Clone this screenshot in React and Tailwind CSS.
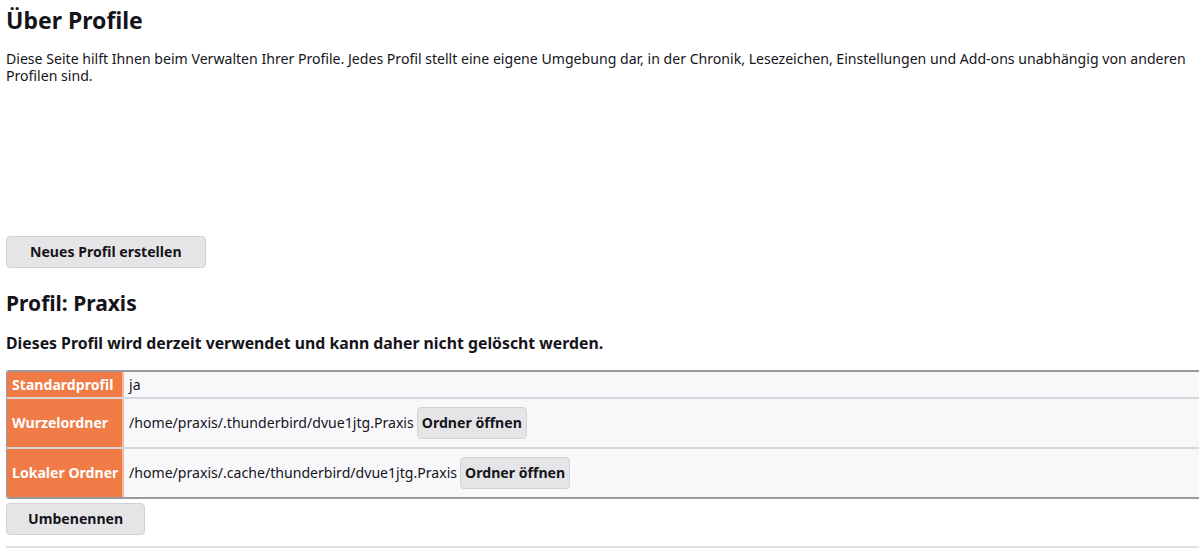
const rows = [
  { label: 'Standardprofil', value: 'ja' },
  { label: 'Wurzelordner', value: '/home/praxis/.thunderbird/dvue1jtg.Praxis', button: true },
  { label: 'Lokaler Ordner', value: '/home/praxis/.cache/thunderbird/dvue1jtg.Praxis', button: true },
]

function Btn({ children, className = '' }) {
  return (
    <button
      className={`whitespace-nowrap rounded-[4px] border border-[#d2d2d6] bg-[#e5e5e7] text-[14.1px] font-bold text-[#15141a] ${className}`}
    >
      {children}
    </button>
  )
}

export default function App() {
  return (
    <div className="min-h-[555px] bg-white px-[6px] pr-[0px] text-[#15141a] font-['Noto_Sans',sans-serif]">
      <h1 className="pt-[4px] text-[23px] font-bold leading-[32px]">Über Profile</h1>
      <p className="mt-[14px] pr-[4px] text-[14.1px] leading-[17px]">
        Diese Seite hilft Ihnen beim Verwalten Ihrer Profile. Jedes Profil stellt eine eigene Umgebung dar, in der
        Chronik, Lesezeichen, Einstellungen und Add-ons unabhängig von anderen Profilen sind.
      </p>

      <div className="mt-[152px]">
        <Btn className="h-[32px] px-[23px]">Neues Profil erstellen</Btn>
      </div>

      <h2 className="mt-[21px] text-[21px] font-bold leading-[28px]">Profil: Praxis</h2>
      <p className="mt-[16px] text-[15.8px] font-bold leading-[20px]">
        Dieses Profil wird derzeit verwendet und kann daher nicht gelöscht werden.
      </p>

      <div className="mt-[17px] overflow-hidden rounded-l-[3px] border-y-2 border-l border-[#9a9a9e] bg-[#f8f8fa] text-[14.1px]">
        {rows.map((r, i) => (
          <div key={r.label} className={`flex ${i > 0 ? 'border-t-2 border-[#d7d7db]' : ''}`}>
            <div
              className={`flex w-[117px] shrink-0 items-center whitespace-nowrap border-r-2 border-[#f6b89a] bg-[#f17b47] px-[5px] font-bold text-white ${
                r.button ? 'h-[48px]' : 'h-[25px]'
              }`}
            >
              {r.label}
            </div>
            <div className="flex items-center gap-[3px] px-[5px] whitespace-nowrap">
              <span>{r.value}</span>
              {r.button && <Btn className="h-[32px] px-[4px]">Ordner öffnen</Btn>}
            </div>
          </div>
        ))}
      </div>

      <div className="mt-[4px]">
        <Btn className="h-[32px] px-[21px]">Umbenennen</Btn>
      </div>
      <hr className="mt-[11px] border-t-2 border-[#e0e0e2]" />
    </div>
  )
}
